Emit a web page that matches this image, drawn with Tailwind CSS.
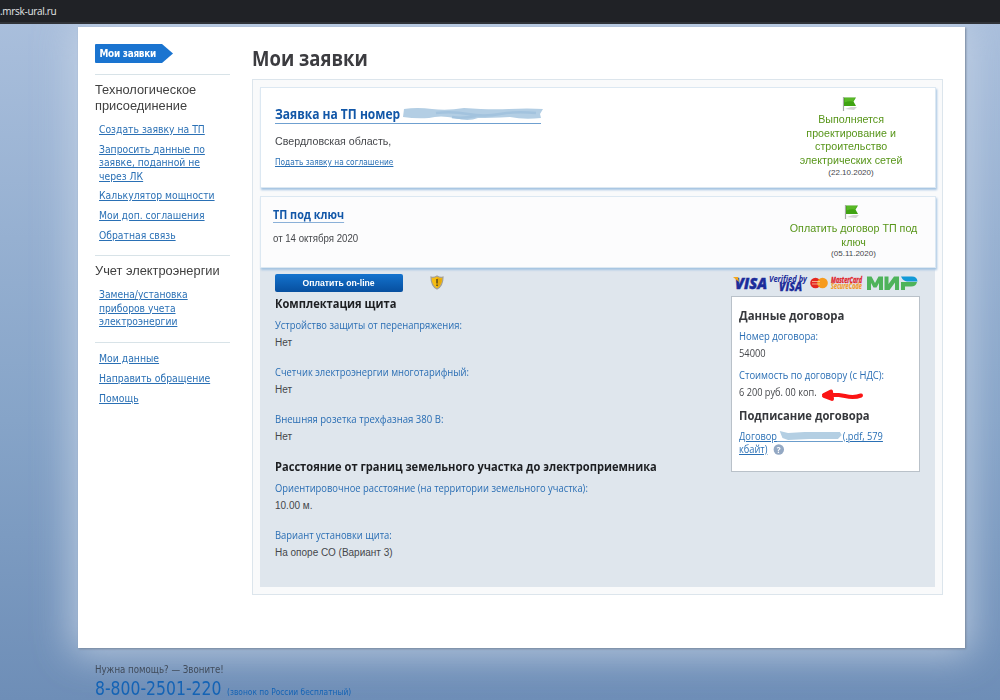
<!DOCTYPE html>
<html lang="ru">
<head>
    <meta charset="UTF-8">
    <meta name="viewport" content="width=device-width, initial-scale=1.0">
    <title>Мои заявки</title>
    <script src="https://cdn.jsdelivr.net/npm/@tailwindcss/browser@4"></script>
</head>
<body class="w-[1000px] h-[700px] overflow-hidden bg-gradient-to-b from-[#abc0dd] via-[#86a4c8] via-60% to-[#6e8eb7] font-['Liberation_Sans',sans-serif] text-[#45474b]">
    <!-- Browser bar -->
    <div class="relative z-10 h-6 bg-[#202226] border-b-2 border-[#303338] flex items-center overflow-hidden">
        <span class="text-[10px] leading-[22px] text-[#e4e6e8] font-medium font-['Open_Sans',sans-serif] whitespace-nowrap tracking-[-0.3px]">.mrsk-ural.ru</span>
    </div>

    <!-- Page -->
    <div class="mt-[3px] ml-[78px] w-[887px] h-[621px] bg-white flex shadow-[1px_1px_2px_#76869c,0_0_36px_6px_rgba(200,212,230,0.8)]">
        <!-- Sidebar -->
        <nav class="ml-[17px] w-[135px] pt-[17px] shrink-0">
            <a href="#" class="relative block w-[78px] h-[19px]">
                <svg class="absolute inset-0" width="78" height="19" viewBox="0 0 78 19"><path d="M1 0H67L78 9.500L67 19H1Q0 19 0 18V1Q0 0 1 0Z" fill="#1a74d0"/></svg>
                <span class="relative block pl-[5px] text-[11px] leading-[19px] font-bold text-white whitespace-nowrap font-['DejaVu_Sans_Condensed',sans-serif] tracking-[-0.3px] origin-left scale-x-[0.9]">Мои заявки</span>
            </a>
            <div class="mt-[11px] border-t border-[#d8e3e8]"></div>
            <h3 class="mt-[7px] text-[13.500px] leading-4 text-[#404040] whitespace-nowrap origin-left scale-x-[0.95]">Технологическое<br>присоединение</h3>
            <ul class="mt-[9px] ml-1 text-[11px] leading-[13.600px] text-[#2a70b5] underline whitespace-nowrap font-['DejaVu_Sans_Condensed',sans-serif] origin-left scale-x-[0.935]">
                <li class="mb-[6px]"><a href="#">Создать заявку на ТП</a></li>
                <li class="mb-[6px]"><a href="#">Запросить данные по<br>заявке, поданной не<br>через ЛК</a></li>
                <li class="mb-[6px]"><a href="#">Калькулятор мощности</a></li>
                <li class="mb-[6px]"><a href="#">Мои доп. соглашения</a></li>
                <li><a href="#">Обратная связь</a></li>
            </ul>
            <div class="mt-[13px] border-t border-[#d8e3e8]"></div>
            <h3 class="mt-[7px] text-[13.500px] leading-4 text-[#404040] whitespace-nowrap origin-left scale-x-[0.95]">Учет электроэнергии</h3>
            <ul class="mt-[9px] ml-1 text-[11px] leading-[13.600px] text-[#2a70b5] underline whitespace-nowrap font-['DejaVu_Sans_Condensed',sans-serif] origin-left scale-x-[0.93]">
                <li><a href="#">Замена/установка<br>приборов учета<br>электроэнергии</a></li>
            </ul>
            <div class="mt-[13px] border-t border-[#d8e3e8]"></div>
            <ul class="mt-[9px] ml-1 text-[11px] leading-[14px] text-[#2a70b5] underline whitespace-nowrap font-['DejaVu_Sans_Condensed',sans-serif] origin-left scale-x-[0.94]">
                <li class="mb-[6px]"><a href="#">Мои данные</a></li>
                <li class="mb-[6px]"><a href="#">Направить обращение</a></li>
                <li><a href="#">Помощь</a></li>
            </ul>
        </nav>

        <!-- Requests -->
        <main class="ml-[22px] w-[691px] pt-[16px]">
            <h1 class="h-[36px] text-[21.500px] leading-[29px] font-bold text-[#3c3c40] whitespace-nowrap font-['Open_Sans',sans-serif] origin-left scale-x-[0.86]">Мои заявки</h1>
            <div class="h-[516px] border border-[#dce5ec] bg-[#f9fafb] p-[7px]">
                <!-- Request card -->
                <section class="h-[101px] w-[676px] bg-white border border-[#dce8f2] flex justify-between shadow-[1px_2px_2px_#a4c4e2]">
                    <div class="pl-[14px] pt-[17px] whitespace-nowrap">
                        <div class="w-[266px] h-[19px] border-b border-[#6fa0d0] flex items-center">
                            <a href="#" class="text-[13.500px] leading-[19px] font-bold text-[#1257a8] font-['Open_Sans',sans-serif] origin-left scale-x-[0.89]">Заявка на ТП номер</a>
                            <svg class="absolute left-[402px] top-[106px] blur-[0.7px]" width="142" height="18" viewBox="0 0 142 18">
                                <path d="M2 3Q15 1 30 3T62 2Q88 4 107 3T141 3L138 8L139 12Q122 14 108 11Q88 12 76 12Q66 16 53 12Q38 9 27 12Q14 13 1 11Z" fill="#b3cee4"/>
                                <path d="M34 7Q50 5 66 8T98 8T134 7M50 11Q60 13 74 10" fill="none" stroke="#a3c3de" stroke-width="2.500"/>
                            </svg>
                        </div>
                        <p class="mt-[9px] text-[11px] leading-4 origin-left scale-x-[0.97]">Свердловская область,</p>
                        <a href="#" class="mt-[7px] block text-[9px] leading-3 text-[#2a70b5] underline font-['DejaVu_Sans_Condensed',sans-serif] origin-left scale-x-[0.915]">Подать заявку на соглашение</a>
                    </div>
                    <div class="w-[168px] pt-[8px] flex flex-col items-center text-center">
                        <svg class="-ml-[3px]" width="16" height="16" viewBox="0 0 16 16">
                            <path d="M3 13L9 11H15L12 14Z" fill="#d4d4d4"/>
                            <path d="M1.500 1V15" stroke="#a5a9a5" stroke-width="1.200"/>
                            <path d="M2 1.500H14L11.500 5.500L14 10H2Z" fill="#3fa312"/>
                            <path d="M2.500 2H13L11 5.500Q7 4.500 2.500 6.500Z" fill="#58b826"/>
                        </svg>
                        <p class="mt-[1px] text-[11.500px] leading-[13.600px] text-[#579519] whitespace-nowrap scale-x-[0.93]">Выполняется<br>проектирование и<br>строительство<br>электрических сетей</p>
                        <p class="mt-px text-[8px] leading-[10px]">(22.10.2020)</p>
                    </div>
                </section>
                <!-- Turnkey card -->
                <section class="mt-[8px] h-[72px] w-[676px] bg-[#fcfcfd] border border-[#dce8f2] flex justify-between shadow-[1px_2px_2px_#a4c4e2] relative">
                    <div class="pl-[12px] pt-[8px] whitespace-nowrap">
                        <a href="#" class="block w-[79px] h-[18px] border-b border-[#8ab0d8] text-[12px] leading-[19px] font-bold text-[#1257a8] font-['Open_Sans',sans-serif] origin-left scale-x-[0.9]">ТП под ключ</a>
                        <p class="mt-[8px] text-[10px] leading-4 origin-left scale-x-[0.965]">от 14 октября 2020</p>
                    </div>
                    <div class="w-[163px] pt-[7px] flex flex-col items-center text-center">
                        <svg class="-ml-[3px]" width="16" height="16" viewBox="0 0 16 16">
                            <path d="M3 13L9 11H15L12 14Z" fill="#d4d4d4"/>
                            <path d="M1.500 1V15" stroke="#a5a9a5" stroke-width="1.200"/>
                            <path d="M2 1.500H14L11.500 5.500L14 10H2Z" fill="#3fa312"/>
                            <path d="M2.500 2H13L11 5.500Q7 4.500 2.500 6.500Z" fill="#58b826"/>
                        </svg>
                        <p class="mt-[2px] text-[11.500px] leading-[13.600px] text-[#579519] whitespace-nowrap scale-x-[0.93]">Оплатить договор ТП под<br>ключ</p>
                        <p class="text-[8px] leading-[10px]">(05.11.2020)</p>
                    </div>
                </section>
                <!-- Details -->
                <section class="h-[319px] w-[675px] bg-[#dfe6ed] flex justify-between pl-[15px] pr-[16px] pt-[6px] whitespace-nowrap">
                    <div class="w-[440px]">
                        <div class="flex items-start">
                            <button class="w-[128px] h-[18px] rounded-[2px] bg-gradient-to-b from-[#1473ce] to-[#074f9f] text-white text-[9.500px] leading-[16px] font-bold"><span class="inline-block scale-x-[0.91]">Оплатить on-line</span></button>
                            <svg class="ml-[27px] mt-[1px]" width="14" height="15" viewBox="0 0 14 15">
                                <path d="M7 1Q4 3 1 2Q1 11 7 14Q13 11 13 2Q10 3 7 1Z" fill="#f6bd13" stroke="#a39e94" stroke-width="1.200"/>
                                <path d="M7 2.500V12.500Q11.500 10 12 3.500Q9 4 7 2.500Z" fill="#e6aa0a"/>
                                <path d="M7 4V8.500M7 9.500V11" stroke="#42371c" stroke-width="1.300"/>
                            </svg>
                        </div>
                        <h2 class="mt-[2px] text-[13px] leading-[18px] font-bold text-[#1d1f22] font-['Open_Sans',sans-serif] origin-left scale-x-[0.855]">Комплектация щита</h2>
                        <dl class="text-[10px]">
                            <dt class="mt-[5px] text-[11px] leading-[16px] text-[#2a6eb4] font-['Open_Sans',sans-serif] origin-left scale-x-[0.853]">Устройство защиты от перенапряжения:</dt>
                            <dd class="mt-[2px] leading-4">Нет</dd>
                            <dt class="mt-[13px] text-[11px] leading-[16px] text-[#2a6eb4] font-['Open_Sans',sans-serif] origin-left scale-x-[0.853]">Счетчик электроэнергии многотарифный:</dt>
                            <dd class="mt-[2px] leading-4">Нет</dd>
                            <dt class="mt-[13px] text-[11px] leading-[16px] text-[#2a6eb4] font-['Open_Sans',sans-serif] origin-left scale-x-[0.87]">Внешняя розетка трехфазная 380 В:</dt>
                            <dd class="mt-[2px] leading-4">Нет</dd>
                        </dl>
                        <h2 class="mt-[12px] text-[13px] leading-[18px] font-bold text-[#1d1f22] font-['Open_Sans',sans-serif] origin-left scale-x-[0.855]">Расстояние от границ земельного участка до электроприемника</h2>
                        <dl class="text-[10px]">
                            <dt class="mt-[5px] text-[11px] leading-[16px] text-[#2a6eb4] font-['Open_Sans',sans-serif] origin-left scale-x-[0.853]">Ориентировочное расстояние (на территории земельного участка):</dt>
                            <dd class="mt-[2px] leading-4">10.00 м.</dd>
                            <dt class="mt-[13px] text-[11px] leading-[16px] text-[#2a6eb4] font-['Open_Sans',sans-serif] origin-left scale-x-[0.855]">Вариант установки щита:</dt>
                            <dd class="mt-[2px] leading-4">На опоре СО (Вариант 3)</dd>
                        </dl>
                    </div>
                    <div class="w-[188px] shrink-0">
                        <!-- Payment systems -->
                        <svg class="ml-[2px] overflow-visible" width="186" height="22" viewBox="0 0 186 22" font-family="Open Sans, sans-serif" font-style="italic" font-weight="bold">
                            <text x="2" y="15" font-size="16.500" font-weight="800" fill="#1c2c9a" stroke="#1c2c9a" stroke-width="0.500" textLength="32" lengthAdjust="spacingAndGlyphs">VISA</text>
                            <path d="M0 3H5L6 8Z" fill="#f4a81c"/>
                            <text x="36" y="7.500" font-size="9.500" fill="#1c2c9a" textLength="38" lengthAdjust="spacingAndGlyphs">Verified by</text>
                            <text x="46" y="17" font-size="11.500" font-weight="800" fill="#1c2c9a" stroke="#1c2c9a" stroke-width="0.300" textLength="23" lengthAdjust="spacingAndGlyphs">VISA</text>
                            <circle cx="82.500" cy="9" r="5.300" fill="#e52620"/>
                            <circle cx="89.500" cy="9" r="5.300" fill="#f79b1d"/>
                            <path d="M79 7.500H87M79 10H87" stroke="#f9c9a0" stroke-width="0.800"/>
                            <text x="98" y="8.500" font-size="8" fill="#e0222a" stroke="#e0222a" stroke-width="0.300" textLength="31" lengthAdjust="spacingAndGlyphs">MasterCard</text>
                            <text x="98" y="15" font-size="8" fill="#f59a28" stroke="#f59a28" stroke-width="0.200" textLength="31" lengthAdjust="spacingAndGlyphs">SecureCode</text>
                            <!-- Mir mark -->
                            <g fill="#4eb35a">
                                <path d="M134 16V2.500H138.500L142 9L145.500 2.500H150V16H146V9L143.500 13.500H140.500L138 9V16Z"/>
                                <path d="M151.500 16V2.500H155.500V10L161 2.500H166V16H162V8.500L156.500 16Z"/>
                                <path d="M168 8H184Q183 12.500 178 12.500H172V16H168Z"/>
                            </g>
                            <path d="M168 2.500H179Q184 2.500 184.500 7.500H174Q170 7 168 2.500Z" fill="#129ad7"/>
                        </svg>
                        <!-- Contract -->
                        <div class="relative w-[189px] h-[176px] bg-white border border-[#b9c1c9] pl-[7px] pt-[9px]">
                            <h2 class="text-[13px] leading-[18px] font-bold text-[#36383c] font-['Open_Sans',sans-serif] origin-left scale-x-[0.875]">Данные договора</h2>
                            <p class="mt-[4px] text-[10.500px] leading-4 text-[#2a6eb4] font-['Open_Sans',sans-serif] origin-left scale-x-[0.905]">Номер договора:</p>
                            <p class="mt-[1px] text-[10px] leading-4 font-['Open_Sans',sans-serif] origin-left scale-x-[0.93]">54000</p>
                            <p class="mt-[6px] text-[10.500px] leading-4 text-[#2a6eb4] font-['Open_Sans',sans-serif] origin-left scale-x-[0.9]">Стоимость по договору (с НДС):</p>
                            <p class="mt-[1px] text-[10px] leading-4 font-['Open_Sans',sans-serif] origin-left scale-x-[0.92]">6 200 руб. 00 коп.</p>
                            <svg class="absolute left-[88px] top-[91px]" width="45" height="15" viewBox="0 0 45 15">
                                <path d="M4 7L11 3.500L12 11L4 8L11 6V9M5 7Q16 6 25 8T41 7.500" fill="none" stroke="#fb1414" stroke-width="4" stroke-linecap="round" stroke-linejoin="round"/>
                            </svg>
                            <h2 class="mt-[6px] text-[13px] leading-[18px] font-bold text-[#36383c] font-['Open_Sans',sans-serif] origin-left scale-x-[0.865]">Подписание договора</h2>
                            <div class="mt-[6px] text-[10px] leading-[13px] text-[#2a70b5] font-['Open_Sans',sans-serif] origin-left scale-x-[0.925]">
                                <a href="#" class="flex"><span class="underline">Договор</span><span class="w-[71px] border-b border-[#6b9dcc] h-[12px]"><svg class="blur-[0.5px]" width="71" height="11" viewBox="0 0 71 11"><path d="M3 1L12 3L30 2L68 2L70 5L66 9L35 9L12 10L6 8Z" fill="#b4cfe3"/></svg></span><span class="underline">(.pdf, 579</span></a>
                                <div class="flex items-center"><a href="#" class="underline">кбайт)</a>
                                    <svg class="ml-[6px]" width="12" height="11" viewBox="0 0 11 11" preserveAspectRatio="none"><circle cx="5.500" cy="5.500" r="5.200" fill="#93a8c3"/><text x="5.500" y="8.500" font-size="8" font-weight="bold" text-anchor="middle" fill="#fff">?</text></svg>
                                </div>
                            </div>
                        </div>
                    </div>
                </section>
            </div>
        </main>
    </div>

    <!-- Footer -->
    <footer class="relative ml-[95px] pt-[14px] whitespace-nowrap font-['DejaVu_Sans_Condensed',sans-serif]">
        <p class="text-[10.500px] leading-[14px] text-[#404b5a] origin-left scale-x-[0.915]">Нужна помощь? — Звоните!</p>
        <div class="flex items-baseline text-[#1463b5]">
            <span class="text-[19px] leading-6 w-[126px] origin-left scale-x-[0.915]">8-800-2501-220</span>
            <span class="ml-[6px] text-[9px] origin-left scale-x-[0.925]">(звонок по России бесплатный)</span>
        </div>
    </footer>
</body>
</html>
